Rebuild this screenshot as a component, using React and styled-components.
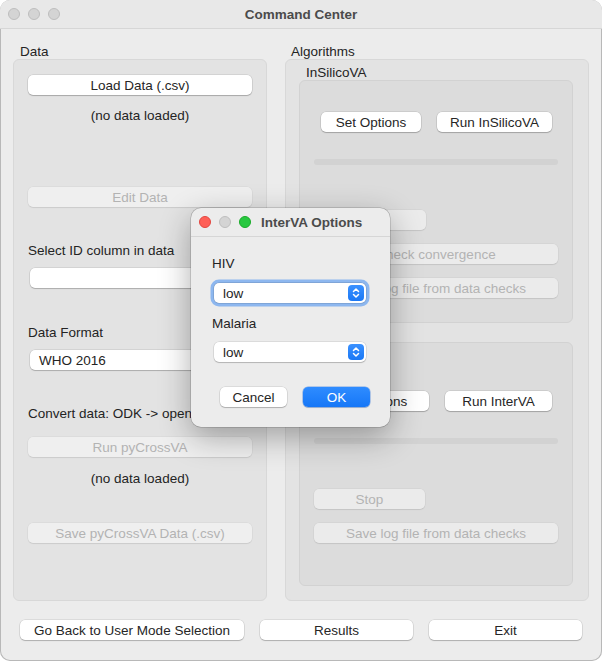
import React from 'react';
import styled, { createGlobalStyle } from 'styled-components';

const GlobalStyle = createGlobalStyle`
  body {
    margin: 0;
    background: #ffffff;
    font-family: "Liberation Sans", Arial, sans-serif;
    font-size: 13.5px;
    color: #242424;
  }
`;

const Window = styled.div`
  position: relative;
  width: 602px;
  height: 661px;
  box-sizing: border-box;
  background: #ececec;
  border-radius: 10px;
  box-shadow: inset 0 0 0 1px #b8b8b8;
  overflow: hidden;
  display: flex;
  flex-direction: column;
`;

const TitleBar = styled.div`
  height: 29px;
  box-sizing: border-box;
  border-bottom: 1px solid #d6d6d6;
  background: #e8e8e8;
  display: grid;
  grid-template-columns: 1fr auto 1fr;
  align-items: center;
`;

const Lights = styled.div`
  display: flex;
  gap: 8px;
  padding-left: 8px;
`;

const Light = styled.span`
  width: 12px;
  height: 12px;
  border-radius: 50%;
  box-sizing: border-box;
  background: ${(p) => p.$color || '#d4d4d4'};
  border: 0.5px solid ${(p) => p.$edge || '#bdbdbd'};
`;

const WindowTitle = styled.div`
  font-weight: bold;
  font-size: 13.5px;
  color: #4b4b4b;
  margin-left: ${(p) => p.$offset || 0}px;
`;

const Content = styled.div`
  padding: 15px 13px 0;
`;

const Columns = styled.div`
  display: grid;
  grid-template-columns: 254px 304px;
  column-gap: 18px;
`;

const Column = styled.div`
  display: flex;
  flex-direction: column;
`;

const GroupLabel = styled.div`
  line-height: 15px;
  height: 15px;
  padding-left: ${(p) => p.$indent || 7}px;
  margin-top: ${(p) => p.$mt || 0}px;
`;

const GroupBox = styled.div`
  height: 542px;
  box-sizing: border-box;
  background: #e3e3e3;
  border: 1px solid #d8d8d8;
  border-radius: 6px;
  display: flex;
  flex-direction: column;
  padding: ${(p) => p.$pad || '0 14px'};
`;

const InnerBox = styled.div`
  height: ${(p) => p.$h}px;
  flex-shrink: 0;
  box-sizing: border-box;
  background: #dcdcdc;
  border: 1px solid #d2d2d2;
  border-radius: 6px;
  display: flex;
  flex-direction: column;
  padding: 0 14px;
`;

const Button = styled.button`
  font-family: inherit;
  font-size: 13.5px;
  height: 20px;
  padding: 0;
  border: none;
  border-radius: 5px;
  white-space: nowrap;
  width: ${(p) => (p.$w ? `${p.$w}px` : '100%')};
  margin-top: ${(p) => p.$mt || 0}px;
  flex-shrink: 0;
  color: ${(p) => (p.disabled ? '#b3b3b3' : '#262626')};
  background: ${(p) => (p.disabled ? 'rgba(255,255,255,0.42)' : '#ffffff')};
  box-shadow: ${(p) =>
    p.disabled
      ? '0 0 0 0.5px rgba(0,0,0,0.06), 0 1px 1px rgba(0,0,0,0.08)'
      : '0 0 0 0.5px rgba(0,0,0,0.14), 0 1px 1px rgba(0,0,0,0.2)'};
`;

const PrimaryButton = styled(Button)`
  color: #ffffff;
  background: linear-gradient(#2f8cff, #1677f7);
  box-shadow: 0 0 0 0.5px rgba(0, 90, 220, 0.5), 0 1px 1px rgba(0, 0, 0, 0.15);
`;

const Note = styled.div`
  line-height: 16px;
  text-align: center;
  margin-top: ${(p) => p.$mt || 0}px;
`;

const FieldLabel = styled.div`
  line-height: 16px;
  white-space: nowrap;
  margin-top: ${(p) => p.$mt || 0}px;
`;

const Combo = styled.div`
  position: relative;
  height: 20px;
  margin: ${(p) => p.$mt || 0}px 0 0 ${(p) => p.$ml || 2}px;
  width: ${(p) => (p.$w ? `${p.$w}px` : 'auto')};
  background: #ffffff;
  border-radius: 5px;
  box-shadow: ${(p) =>
    p.$focus
      ? '0 0 0 0.5px rgba(0,0,0,0.2), 0 0 0 3.5px rgba(110,165,240,0.75)'
      : '0 0 0 0.5px rgba(0,0,0,0.14), 0 1px 1px rgba(0,0,0,0.18)'};
  display: flex;
  align-items: center;
  justify-content: space-between;
  padding: 0 2px 0 9px;
  box-sizing: border-box;
`;

const Stepper = styled.span`
  width: 16px;
  height: 16px;
  border-radius: 4px;
  background: ${(p) => (p.$active ? 'linear-gradient(#3b91ff, #1a78f5)' : '#c9c9c9')};
  display: flex;
  align-items: center;
  justify-content: center;
`;

const ButtonRow = styled.div`
  display: flex;
  gap: 16px;
  padding-left: ${(p) => p.$indent || 0}px;
  margin-top: ${(p) => p.$mt || 0}px;
`;

const Progress = styled.div`
  height: 6px;
  border-radius: 3px;
  background: #d2d2d2;
  margin-top: ${(p) => p.$mt || 0}px;
`;

const BottomBar = styled.div`
  display: grid;
  grid-template-columns: 224px 153px 153px;
  column-gap: 16px;
  padding: 19px 20px 0;
`;

const Dialog = styled.div`
  position: absolute;
  left: 191px;
  top: 208px;
  width: 199px;
  height: 219px;
  box-sizing: border-box;
  background: #ececec;
  border-radius: 10px;
  box-shadow: 0 0 0 0.5px rgba(0, 0, 0, 0.25), 0 10px 32px rgba(0, 0, 0, 0.32);
  display: flex;
  flex-direction: column;
  overflow: hidden;
`;

const DialogTitleBar = styled.div`
  height: 29px;
  box-sizing: border-box;
  border-bottom: 1px solid #d6d6d6;
  display: flex;
  align-items: center;
`;

const DialogBody = styled.div`
  padding: 0 21px;
  display: flex;
  flex-direction: column;
`;

const Chevrons = () => (
  <svg width="10" height="12" viewBox="0 0 10 12" fill="none" stroke="#fff" strokeWidth="1.5" strokeLinecap="round" strokeLinejoin="round">
    <path d="M2.5 4.5 L5 2 L7.5 4.5" />
    <path d="M2.5 7.5 L5 10 L7.5 7.5" />
  </svg>
);

export default function App() {
  return (
    <>
      <GlobalStyle />
      <Window>
        <TitleBar>
          <Lights>
            <Light />
            <Light />
            <Light />
          </Lights>
          <WindowTitle>Command Center</WindowTitle>
          <span />
        </TitleBar>

        <Content>
          <Columns>
            <Column>
              <GroupLabel>Data</GroupLabel>
              <GroupBox>
                <Button $mt={15}>Load Data (.csv)</Button>
                <Note $mt={13}>(no data loaded)</Note>
                <Button $mt={63} disabled>Edit Data</Button>
                <FieldLabel $mt={36}>Select ID column in data</FieldLabel>
                <Combo $mt={9}>
                  <span />
                  <Stepper><Chevrons /></Stepper>
                </Combo>
                <FieldLabel $mt={37}>Data Format</FieldLabel>
                <Combo $mt={9}>
                  <span>WHO 2016</span>
                  <Stepper><Chevrons /></Stepper>
                </Combo>
                <FieldLabel $mt={36}>Convert data: ODK -&gt; openVA</FieldLabel>
                <Button $mt={15} disabled>Run pyCrossVA</Button>
                <Note $mt={14}>(no data loaded)</Note>
                <Button $mt={36} disabled>Save pyCrossVA Data (.csv)</Button>
              </GroupBox>
            </Column>

            <Column>
              <GroupLabel $indent={6}>Algorithms</GroupLabel>
              <GroupBox $pad="0 15px 0 13px">
                <GroupLabel $mt={5}>InSilicoVA</GroupLabel>
                <InnerBox $h={243}>
                  <ButtonRow $indent={7} $mt={31}>
                    <Button $w={100}>Set Options</Button>
                    <Button $w={115}>Run InSilicoVA</Button>
                  </ButtonRow>
                  <Progress $mt={27} />
                  <Button $w={112} $mt={45} disabled>Stop</Button>
                  <Button $mt={14} disabled>Check convergence</Button>
                  <Button $mt={14} disabled>Save log file from data checks</Button>
                </InnerBox>
                <GroupLabel $mt={4}>InterVA</GroupLabel>
                <InnerBox $h={244}>
                  <ButtonRow $indent={1} $mt={48}>
                    <Button $w={114}>Set Options</Button>
                    <Button $w={107}>Run InterVA</Button>
                  </ButtonRow>
                  <Progress $mt={27} />
                  <Button $w={111} $mt={45} disabled>Stop</Button>
                  <Button $mt={14} disabled>Save log file from data checks</Button>
                </InnerBox>
              </GroupBox>
            </Column>
          </Columns>
        </Content>

        <BottomBar>
          <Button>Go Back to User Mode Selection</Button>
          <Button>Results</Button>
          <Button>Exit</Button>
        </BottomBar>

        <Dialog>
          <DialogTitleBar>
            <Lights>
              <Light $color="#fe5f57" $edge="#e2463f" />
              <Light />
              <Light $color="#28c840" $edge="#1aab29" />
            </Lights>
            <WindowTitle $offset={10}>InterVA Options</WindowTitle>
          </DialogTitleBar>
          <DialogBody>
            <FieldLabel $mt={19}>HIV</FieldLabel>
            <Combo $mt={11} $w={152} $focus>
              <span>low</span>
              <Stepper $active><Chevrons /></Stepper>
            </Combo>
            <FieldLabel $mt={13}>Malaria</FieldLabel>
            <Combo $mt={10} $w={152}>
              <span>low</span>
              <Stepper $active><Chevrons /></Stepper>
            </Combo>
            <ButtonRow $indent={8} $mt={25}>
              <Button $w={67}>Cancel</Button>
              <PrimaryButton $w={67}>OK</PrimaryButton>
            </ButtonRow>
          </DialogBody>
        </Dialog>
      </Window>
    </>
  );
}
